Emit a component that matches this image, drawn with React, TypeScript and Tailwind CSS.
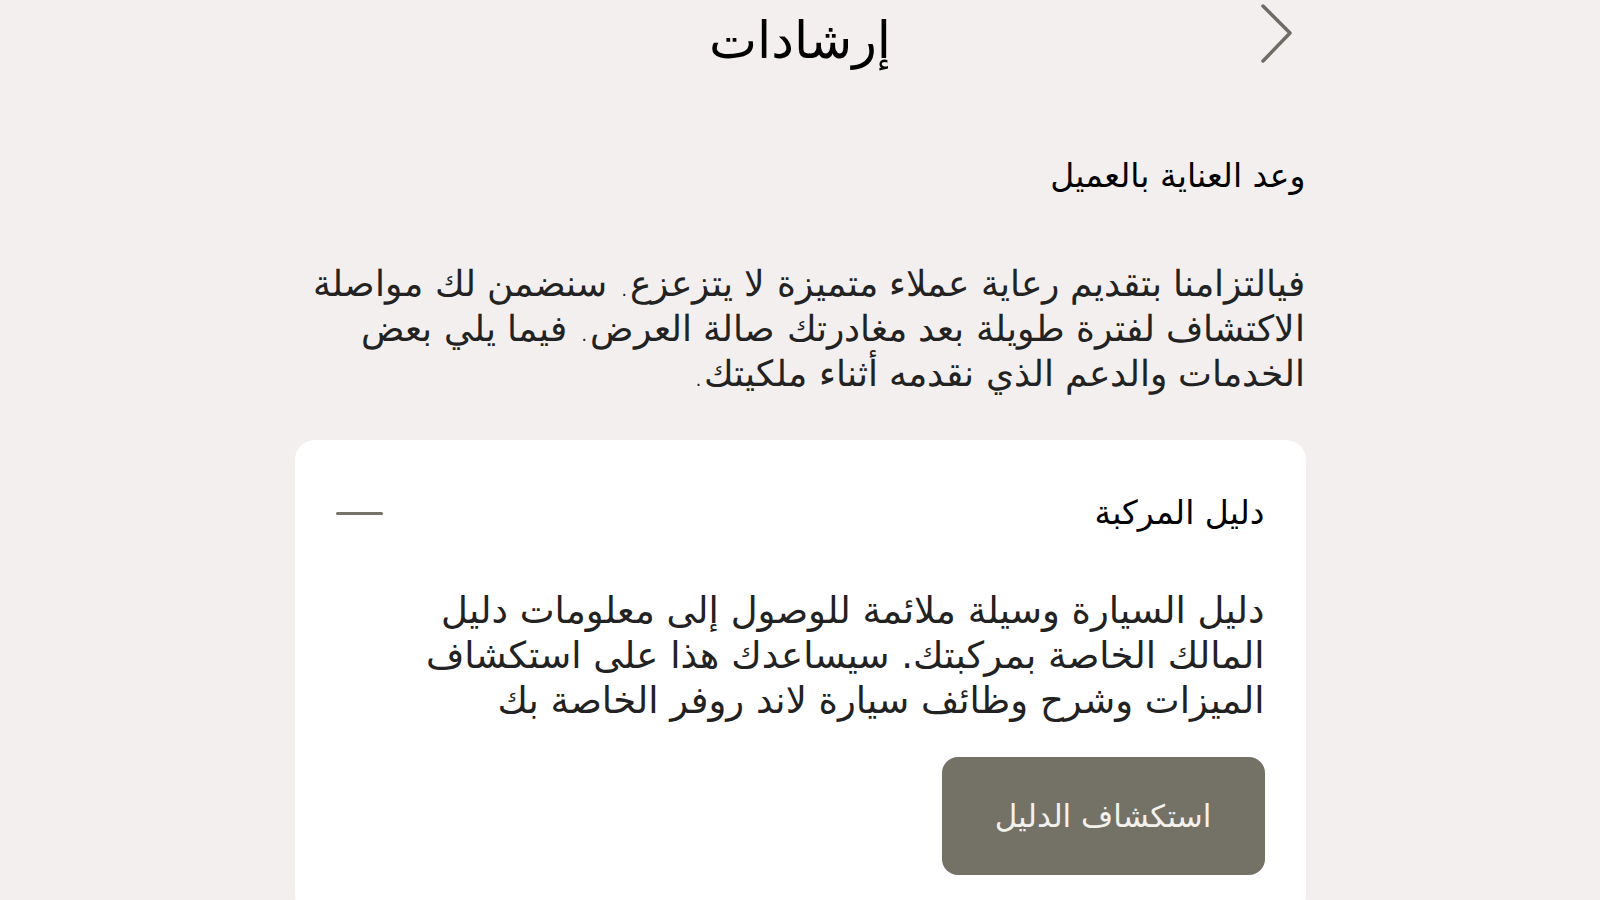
import React from 'react'

export default function App() {
  return (
    <div dir="rtl" className="min-h-screen overflow-hidden bg-[#f2efee] text-[#1a1a1a] font-['DejaVu_Sans',sans-serif]">
      <div className="mx-auto w-[1011px]">
        {/* Header */}
        <div className="relative flex h-[80px] items-center justify-center">
          <h1 className="text-[51px] leading-none font-normal text-black">إرشادات</h1>
          <button className="absolute right-[12px] top-[4px] text-[#6f6c66]" aria-label="back">
            <svg width="34" height="60" viewBox="0 0 34 60" fill="none">
              <path d="M3 2 L30 29 L3 57" stroke="currentColor" strokeWidth="3.5" strokeLinecap="round" strokeLinejoin="round" />
            </svg>
          </button>
        </div>

        {/* Intro */}
        <h2 className="mt-[76px] text-[33px] leading-[40px] font-normal text-black">وعد العناية بالعميل</h2>
        <p className="mt-[65px] text-[36px] leading-[45px] font-light text-[#222]">
          فيالتزامنا بتقديم رعاية عملاء متميزة لا يتزعزع. سنضمن لك مواصلة
          <br />
          الاكتشاف لفترة طويلة بعد مغادرتك صالة العرض. فيما يلي بعض
          <br />
          الخدمات والدعم الذي نقدمه أثناء ملكيتك.
        </p>

        {/* Card */}
        <div className="mt-[44px] rounded-[20px] bg-white px-[41px] pt-[53px] pb-[40px]">
          <div className="flex items-center justify-between">
            <h3 className="text-[33px] leading-[40px] font-normal text-black">دليل المركبة</h3>
            <span className="block h-[3px] w-[47px] rounded-full bg-[#76736b]" />
          </div>
          <p className="mt-[55px] text-[37px] leading-[45px] text-[#222]">
            دليل السيارة وسيلة ملائمة للوصول إلى معلومات دليل
            <br />
            المالك الخاصة بمركبتك. سيساعدك هذا على استكشاف
            <br />
            الميزات وشرح وظائف سيارة لاند روفر الخاصة بك
          </p>
          <button className="mt-[34px] flex h-[118px] w-[323px] items-center justify-center rounded-[16px] bg-[#747167] text-[31px] text-[#f3f1ec]">
            استكشاف الدليل
          </button>
        </div>
      </div>
    </div>
  )
}
